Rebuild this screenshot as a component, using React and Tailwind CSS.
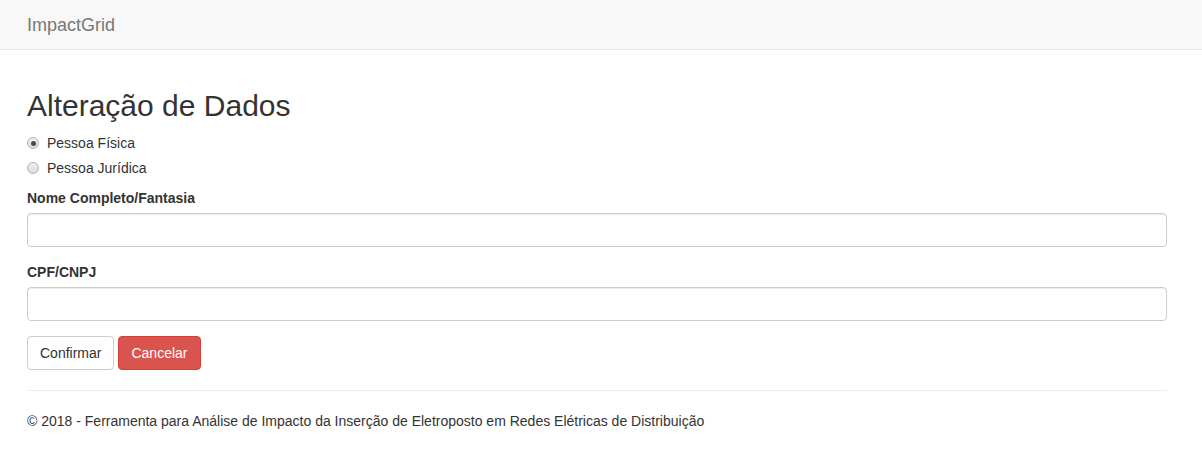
import { useState } from 'react';

function Radio({ checked, label, onClick }) {
  return (
    <label className="flex items-center h-5 cursor-pointer" onClick={onClick}>
      <span className="w-[12px] h-[12px] rounded-full border border-[#b4b4b4] bg-gradient-to-b from-[#f0f0f0] to-[#dcdcdc] flex items-center justify-center">
        {checked && <span className="w-[5px] h-[5px] rounded-full bg-[#4a4a4a]" />}
      </span>
      <span className="ml-[8px] text-[14px] text-[#333]">{label}</span>
    </label>
  );
}

export default function App() {
  const [tipo, setTipo] = useState('fisica');

  return (
    <div className="min-h-screen bg-white text-[#333] text-[14px] leading-[20px]" style={{ fontFamily: '"Liberation Sans", Arial, sans-serif' }}>
      {/* Navbar */}
      <div className="h-[50px] bg-[#f8f8f8] border-b border-[#e7e7e7] flex items-center">
        <span className="ml-[27px] text-[18px] text-[#777]">ImpactGrid</span>
      </div>

      <div className="w-[1140px] ml-[27px] pt-[39px]">
        <h2 className="text-[30px] leading-[33px] font-normal mb-[11px]">Alteração de Dados</h2>

        <div className="mt-[10px]">
          <Radio checked={tipo === 'fisica'} label="Pessoa Física" onClick={() => setTipo('fisica')} />
        </div>
        <div className="mt-[5px] mb-[10px]">
          <Radio checked={tipo === 'juridica'} label="Pessoa Jurídica" onClick={() => setTipo('juridica')} />
        </div>

        <div className="mb-[15px]">
          <label className="block font-bold mb-[5px]">Nome Completo/Fantasia</label>
          <input className="w-full h-[34px] border border-[#ccc] rounded-[4px] px-3 outline-none shadow-[inset_0_1px_1px_rgba(0,0,0,0.075)]" />
        </div>

        <div className="mb-[15px]">
          <label className="block font-bold mb-[5px]">CPF/CNPJ</label>
          <input className="w-full h-[34px] border border-[#ccc] rounded-[4px] px-3 outline-none shadow-[inset_0_1px_1px_rgba(0,0,0,0.075)]" />
        </div>

        <div className="flex gap-[4px]">
          <button className="h-[34px] px-3 border border-[#ccc] rounded-[4px] bg-white text-[#333]">Confirmar</button>
          <button className="h-[34px] px-3 border border-[#d43f3a] rounded-[4px] bg-[#d9534f] text-white">Cancelar</button>
        </div>

        <hr className="mt-[20px] mb-[20px] border-0 border-t border-[#eee]" />

        <p>© 2018 - Ferramenta para Análise de Impacto da Inserção de Eletroposto em Redes Elétricas de Distribuição</p>
      </div>
    </div>
  );
}
